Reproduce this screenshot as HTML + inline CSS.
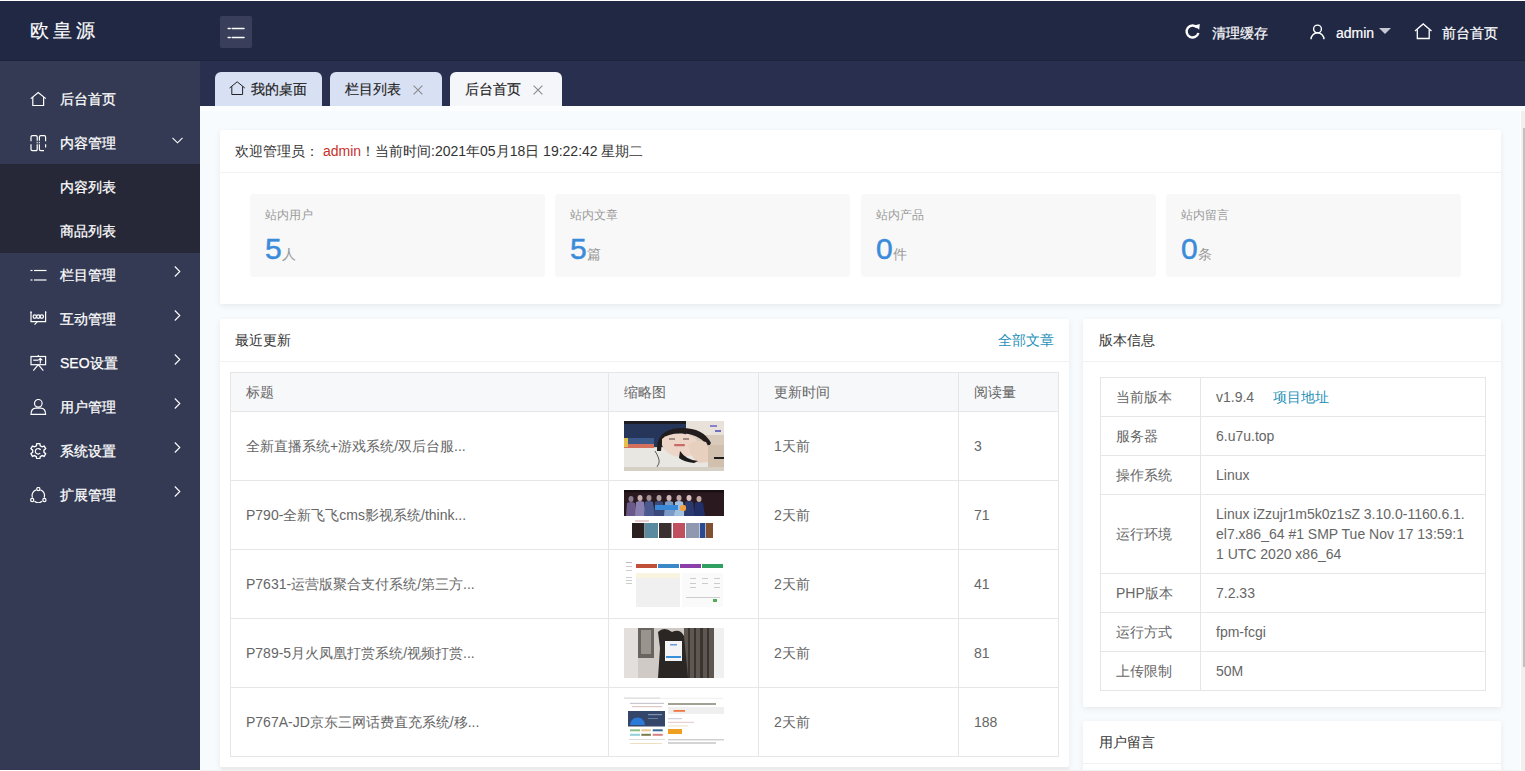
<!DOCTYPE html>
<html><head><meta charset="utf-8">
<style>
*{margin:0;padding:0;box-sizing:border-box}
html,body{width:1525px;height:771px;overflow:hidden;background:#fff;font-family:"Liberation Sans",sans-serif;font-size:14px;color:#333}
.abs{position:absolute}
#header{position:absolute;left:0;top:1px;width:1525px;height:60px;background:#212844;border-bottom:1px solid #1e233d}
#logo{position:absolute;left:30px;top:18px;color:#fff;font-size:19px;letter-spacing:3.8px;line-height:24px;-webkit-text-stroke:0.2px #fff}
#flex{position:absolute;left:220px;top:15px;width:32px;height:32px;background:#393e5b;border-radius:2px}
.hitem{position:absolute;top:22px;height:20px;line-height:20px;color:#fff;font-size:14px}
.hitem span{-webkit-text-stroke:0.2px #fff}
.tab span{-webkit-text-stroke:0.15px #222}
#side{position:absolute;left:0;top:61px;width:200px;height:709px;background:#343a53}
.mi{position:absolute;left:0;width:200px;height:44px;line-height:44px;color:#fff;font-size:14px}
.mi .t{position:absolute;left:60px;top:0;-webkit-text-stroke:0.25px #fff}
.mi svg.ic{position:absolute;left:30px;top:14px}
.mi .arr{position:absolute;left:172px;top:17px}
#sub{position:absolute;left:0;top:164px;width:200px;height:89px;background:#262838}
#tabbar{position:absolute;left:200px;top:61px;width:1325px;height:45px;background:#292f4e}
.tab{position:absolute;top:72px;height:34px;line-height:34px;background:#d8e0f3;border-radius:6px 6px 0 0;color:#222;font-size:14px}
#content{position:absolute;left:200px;top:106px;width:1320px;height:664px;background:#f8fbfe;overflow:hidden}
.card{position:absolute;background:#fff;box-shadow:0 2px 6px rgba(0,0,0,.07);border-radius:2px}
.ch{position:absolute;left:0;top:0;right:0;height:43px;line-height:42px;padding-left:15px;border-bottom:1px solid #f2f2f2;color:#333}
.stat{position:absolute;top:194px;height:83px;width:295px;background:#f8f8f8;border-radius:4px}
.stat .lb{position:absolute;left:15px;top:13px;font-size:12px;color:#999;line-height:16px}
.stat .num{position:absolute;left:15px;top:40px;font-size:30px;color:#3b8bdb;line-height:30px;-webkit-text-stroke:0.5px #3b8bdb}
.stat .unit{font-size:14px;color:#999;-webkit-text-stroke:0}
table{border-collapse:collapse}
.tb td,.tb th{border:1px solid #e6e6e6;padding:9px 15px;line-height:20px;font-size:14px;color:#666;font-weight:normal;text-align:left;vertical-align:middle}
.tb th{background:#f7f8fa;color:#666}
#sb{position:absolute;left:1521px;top:111px;width:4px;height:659px;background:#f0f0f0}
#thumb{position:absolute;left:1523px;top:128px;width:2px;height:539px;background:#c1c1c1}
</style></head><body>
<div id="header">
  <div id="logo">欧皇源</div>
  <div id="flex">
    <svg width="32" height="32" viewBox="0 0 32 32" style="position:absolute;left:0;top:0"><g stroke="#fff" stroke-width="1.5" stroke-linecap="round"><line x1="8.2" y1="12.6" x2="10.2" y2="12.6"/><line x1="12.2" y1="12.6" x2="24" y2="12.6"/><line x1="8.2" y1="21.5" x2="10.2" y2="21.5"/><line x1="12.2" y1="21.5" x2="24" y2="21.5"/></g></svg>
  </div>
  <div class="hitem" style="left:1185px">
    <svg width="17" height="17" viewBox="0 0 17 17" style="position:absolute;left:-1px;top:0px"><path d="M13.2 4.6 A6 6 0 1 0 14.4 10" fill="none" stroke="#fff" stroke-width="2.4"/><path d="M10.2 2.6 L15.8 1 L15.2 6.8 Z" fill="#fff"/></svg>
    <span style="position:absolute;left:27px;top:0;white-space:nowrap">清理缓存</span>
  </div>
  <div class="hitem" style="left:1310px">
    <svg width="16" height="16" viewBox="0 0 16 16" style="position:absolute;left:0;top:1px"><circle cx="7.5" cy="5" r="3.9" fill="none" stroke="#fff" stroke-width="1.4"/><path d="M1 15.3 A6.5 6.5 0 0 1 14 15.3" fill="none" stroke="#fff" stroke-width="1.4"/></svg>
    <span style="position:absolute;left:26px;top:0">admin</span>
    <svg width="12" height="7" viewBox="0 0 12 7" style="position:absolute;left:69px;top:5px"><path d="M0 0 L12 0 L6 6 Z" fill="#c6c8d6"/></svg>
  </div>
  <div class="hitem" style="left:1414px">
    <svg width="19" height="17" viewBox="0 0 19 17" style="position:absolute;left:0;top:0"><path d="M1 8 L9.2 0.9 L17.5 8" fill="none" stroke="#fff" stroke-width="1.3"/><path d="M3.3 6.5 V15.5 H15.2 V6.5" fill="none" stroke="#fff" stroke-width="1.3"/></svg>
    <span style="position:absolute;left:28px;top:0;white-space:nowrap">前台首页</span>
  </div>
</div>

<div id="side">
</div>
<div id="sub"></div>
<div class="mi" style="top:77px">
  <svg class="ic" width="17" height="16" viewBox="0 0 17 16"><path d="M0.8 7.6 L8.2 1.6 L15.8 7.6" fill="none" stroke="#fff" stroke-width="1.2"/><path d="M2.8 6 V14.5 H13.6 V6" fill="none" stroke="#fff" stroke-width="1.2"/></svg>
  <span class="t">后台首页</span>
</div>
<div class="mi" style="top:121px">
  <svg class="ic" width="17" height="17" viewBox="0 0 17 17" style="top:14px"><g fill="none" stroke="#fff" stroke-width="1.2"><path d="M1 6.3 V2 Q1 0.6 2.4 0.6 H5.8 Q7.2 0.6 7.2 2 V5.8"/><path d="M9.4 5.8 V2 Q9.4 0.6 10.8 0.6 H14.2 Q15.6 0.6 15.6 2 V6.3"/><path d="M1 9.3 V14.2 Q1 15.6 2.4 15.6 H6 Q7.2 15.6 7.2 14.2 V10"/><path d="M9.4 10 V14.2 Q9.4 15.6 10.8 15.6 H14"/><path d="M15.6 9.3 V12.6"/></g><g fill="#fff"><rect x="6.6" y="6.8" width="1.2" height="1"/><rect x="8.8" y="6.8" width="1.2" height="1"/><rect x="6.6" y="8.7" width="1.2" height="1"/><rect x="8.8" y="8.7" width="1.2" height="1"/></g></svg>
  <span class="t">内容管理</span>
  <svg class="arr" width="11" height="7" viewBox="0 0 11 7" style="top:16px"><path d="M0.5 0.8 L5.5 5.8 L10.5 0.8" fill="none" stroke="#fff" stroke-width="1.1"/></svg>
</div>
<div class="mi" style="top:165px"><span class="t">内容列表</span></div>
<div class="mi" style="top:209px"><span class="t">商品列表</span></div>
<div class="mi" style="top:253px">
  <svg class="ic" width="17" height="16" viewBox="0 0 17 16"><g stroke="#fff" stroke-width="1.2"><line x1="0.5" y1="3.5" x2="2.5" y2="3.5"/><line x1="4" y1="3.5" x2="16.5" y2="3.5"/><line x1="0.5" y1="13" x2="2.5" y2="13"/><line x1="4" y1="13" x2="16.5" y2="13"/></g></svg>
  <span class="t">栏目管理</span>
  <svg class="arr" width="7" height="11" viewBox="0 0 7 11" style="top:13px;left:174px"><path d="M0.8 0.5 L5.8 5.5 L0.8 10.5" fill="none" stroke="#fff" stroke-width="1.1"/></svg>
</div>
<div class="mi" style="top:297px">
  <svg class="ic" width="17" height="16" viewBox="0 0 17 16"><g fill="none" stroke="#fff" stroke-width="1.2"><path d="M1 0.2 V2 M15.6 0.2 V2"/><path d="M1 1 V10.6 H15.6 V1"/><path d="M7.3 10.6 L4.6 13.6"/><circle cx="4.8" cy="5.6" r="1.7"/><circle cx="8.3" cy="5.6" r="1.7"/><circle cx="11.8" cy="5.6" r="1.7"/></g></svg>
  <span class="t">互动管理</span>
  <svg class="arr" width="7" height="11" viewBox="0 0 7 11" style="top:13px;left:174px"><path d="M0.8 0.5 L5.8 5.5 L0.8 10.5" fill="none" stroke="#fff" stroke-width="1.1"/></svg>
</div>
<div class="mi" style="top:341px">
  <svg class="ic" width="17" height="16" viewBox="0 0 17 16"><g fill="none" stroke="#fff" stroke-width="1.2"><path d="M8.3 0 V1.5"/><rect x="1" y="1.5" width="14.6" height="8.2"/><path d="M3.2 5.2 H8"/><path d="M10.3 8.5 V3.6 M8.3 5.4 L10.3 3.4 L12.3 5.4"/><path d="M8.3 9.7 L3.3 15.6 M8.3 9.7 L13.3 15.6"/></g></svg>
  <span class="t">SEO设置</span>
  <svg class="arr" width="7" height="11" viewBox="0 0 7 11" style="top:13px;left:174px"><path d="M0.8 0.5 L5.8 5.5 L0.8 10.5" fill="none" stroke="#fff" stroke-width="1.1"/></svg>
</div>
<div class="mi" style="top:385px">
  <svg class="ic" width="17" height="16" viewBox="0 0 17 16"><g fill="none" stroke="#fff" stroke-width="1.2"><circle cx="8.3" cy="4.3" r="3.8"/><path d="M1 15.4 Q1 9.2 6 9.2 H10.6 Q15.6 9.2 15.6 15.4 Z"/></g></svg>
  <span class="t">用户管理</span>
  <svg class="arr" width="7" height="11" viewBox="0 0 7 11" style="top:13px;left:174px"><path d="M0.8 0.5 L5.8 5.5 L0.8 10.5" fill="none" stroke="#fff" stroke-width="1.1"/></svg>
</div>
<div class="mi" style="top:429px">
  <svg class="ic" width="17" height="16" viewBox="0 0 17 16"><g fill="none" stroke="#fff" stroke-width="1.2"><path id="gear" d="M7 0.6 H9.6 L10 2.5 L11.6 3.4 L13.4 2.7 L14.7 5 L13.2 6.3 V8.1 L14.7 9.4 L13.4 11.7 L11.6 11 L10 11.9 L9.6 13.8 H7 L6.6 11.9 L5 11 L3.2 11.7 L1.9 9.4 L3.4 8.1 V6.3 L1.9 5 L3.2 2.7 L5 3.4 L6.6 2.5 Z" transform="translate(8.3,8.2) scale(1.15) translate(-8.3,-7.2)"/><path d="M10.6 7 A2.8 2.8 0 1 0 10.2 10.2"/></g></svg>
  <span class="t">系统设置</span>
  <svg class="arr" width="7" height="11" viewBox="0 0 7 11" style="top:13px;left:174px"><path d="M0.8 0.5 L5.8 5.5 L0.8 10.5" fill="none" stroke="#fff" stroke-width="1.1"/></svg>
</div>
<div class="mi" style="top:473px">
  <svg class="ic" width="17" height="16" viewBox="0 0 17 16"><g fill="none" stroke="#fff" stroke-width="1.2"><path d="M6.3 2.8 A6 6 0 0 0 2.4 10.8"/><path d="M10.3 2.8 A6 6 0 0 1 14.2 10.8"/><path d="M4.5 14.2 A6 6 0 0 0 12.1 14.2"/><circle cx="8.3" cy="2" r="1.6"/><circle cx="2.2" cy="13" r="1.6"/><circle cx="14.4" cy="13" r="1.6"/></g></svg>
  <span class="t">扩展管理</span>
  <svg class="arr" width="7" height="11" viewBox="0 0 7 11" style="top:13px;left:174px"><path d="M0.8 0.5 L5.8 5.5 L0.8 10.5" fill="none" stroke="#fff" stroke-width="1.1"/></svg>
</div>

<div id="tabbar"></div>
<div class="tab" style="left:215px;width:107px">
  <svg width="17" height="15" viewBox="0 0 17 15" style="position:absolute;left:14px;top:8.5px"><path d="M0.6 7 L8.2 0.8 L15.8 7" fill="none" stroke="#222" stroke-width="1"/><path d="M2.8 5.3 V13.5 H13.6 V5.3" fill="none" stroke="#222" stroke-width="1"/></svg>
  <span style="position:absolute;left:36px;top:0">我的桌面</span>
</div>
<div class="tab" style="left:330px;width:112px">
  <span style="position:absolute;left:15px;top:0">栏目列表</span>
  <svg width="10" height="10" viewBox="0 0 10 10" style="position:absolute;left:83px;top:12.5px"><path d="M0.6 0.6 L9.4 9.4 M9.4 0.6 L0.6 9.4" stroke="#8a8a8a" stroke-width="1.1"/></svg>
</div>
<div class="tab" style="left:450px;width:112px;background:#f5f6f9">
  <span style="position:absolute;left:15px;top:0">后台首页</span>
  <svg width="10" height="10" viewBox="0 0 10 10" style="position:absolute;left:83px;top:12.5px"><path d="M0.6 0.6 L9.4 9.4 M9.4 0.6 L0.6 9.4" stroke="#8a8a8a" stroke-width="1.1"/></svg>
</div>

<div id="content"></div><div class="abs" style="left:200px;top:106px;width:1325px;height:5px;background:#fbfdff"></div>

<!-- welcome card -->
<div class="card" style="left:220px;top:130px;width:1281px;height:174px">
  <div class="ch">欢迎管理员： <span style="color:#c9302c">admin</span>！当前时间:2021年05月18日 19:22:42 星期二</div>
</div>
<div class="stat" style="left:250px"><div class="lb">站内用户</div><div class="num">5<span class="unit">人</span></div></div>
<div class="stat" style="left:555px"><div class="lb">站内文章</div><div class="num">5<span class="unit">篇</span></div></div>
<div class="stat" style="left:861px"><div class="lb">站内产品</div><div class="num">0<span class="unit">件</span></div></div>
<div class="stat" style="left:1166px"><div class="lb">站内留言</div><div class="num">0<span class="unit">条</span></div></div>

<!-- recent card -->
<div class="card" style="left:220px;top:319px;width:849px;height:448px">
  <div class="ch">最近更新<span style="position:absolute;right:15px;top:0;color:#2590b8">全部文章</span></div>
</div>
<table class="tb abs" style="left:230px;top:372px;width:829px">
  <tr><th style="width:378px">标题</th><th style="width:150px">缩略图</th><th style="width:200px">更新时间</th><th>阅读量</th></tr>
  <tr style="height:69px"><td>全新直播系统+游戏系统/双后台服...</td><td><svg width="100" height="50" viewBox="0 0 100 50" style="display:block"><defs><filter id="bl1" x="0" y="0" width="1" height="1"><feGaussianBlur stdDeviation="0.7"/></filter></defs><g filter="url(#bl1)"><rect width="100" height="50" fill="#d9cbbb"/><rect x="60" y="0" width="40" height="14" fill="#e9e2da"/><rect x="0" y="0" width="62" height="26" fill="#26355a"/><rect x="0" y="0" width="62" height="3" fill="#1a1a22"/><rect x="0" y="17" width="30" height="6" fill="#3a5a8a"/><rect x="0" y="23" width="30" height="4" fill="#d4705c"/><rect x="0" y="17" width="4" height="9" fill="#e6c050"/><rect x="0" y="27" width="100" height="23" fill="#e9e7e1"/><path d="M33 30 Q32 9 55 7 Q79 6 87 22 L84 27 Q78 14 60 12.5 Q44 12 38 20 L37 30 Z" fill="#221d1f"/><path d="M38 18 Q44 12 58 12.5 Q72 14 74 22 L70 33 Q60 38 50 35 Q40 31 38 24 Z" fill="#edd6c8"/><path d="M64 24 Q71 18 82 21 Q88 30 85 41 L74 42 L67 34 Z" fill="#e8d0bf"/><rect x="50" y="23" width="11" height="2.2" rx="1" fill="#cc6a68"/><rect x="45" y="17.5" width="6" height="1" fill="#5a4040"/><rect x="59" y="17.5" width="6" height="1" fill="#5a4040"/><path d="M56 30 Q62 39 74 40 L70 42 Q60 41 55 37 Z" fill="#1e1a1c"/><rect x="84" y="24" width="16" height="26" fill="#d2c0ae"/><rect x="90" y="36" width="10" height="2" fill="#1a1a1a"/><path d="M31 30 Q36 38 35 42 Q33 46 32 48" stroke="#333" stroke-width="0.8" fill="none"/><rect x="86" y="4" width="7" height="2" fill="#8a80d0"/><rect x="91" y="9" width="6" height="2" fill="#7070c0"/><rect x="0" y="46" width="100" height="4" fill="#d6cfc4"/></g></svg></td><td>1天前</td><td>3</td></tr>
  <tr style="height:69px"><td>P790-全新飞飞cms影视系统/think...</td><td><svg width="100" height="50" viewBox="0 0 100 50" style="display:block"><rect width="100" height="50" fill="#fff"/><rect x="0" y="0" width="100" height="26" fill="#2a1a20"/><rect x="0" y="0" width="100" height="2.5" fill="#1a1014"/><g><ellipse cx="7" cy="9" rx="2.5" ry="3" fill="#8a7a90"/><path d="M2 26 L3 13 Q7 11 11 13 L13 26 Z" fill="#6a5a8a"/><ellipse cx="16" cy="8" rx="2.5" ry="3" fill="#c8b0b0"/><path d="M11 26 L12 12 Q16 10 20 12 L22 26 Z" fill="#8a80b0"/><ellipse cx="25" cy="8" rx="2.5" ry="3" fill="#a09090"/><path d="M20 26 L21 12 Q25 10 29 12 L31 26 Z" fill="#4a5a90"/><ellipse cx="35" cy="8" rx="2.5" ry="3" fill="#b0a0a0"/><path d="M30 26 L31 12 Q35 10 39 12 L41 26 Z" fill="#3a4a7a"/><ellipse cx="45" cy="8" rx="2.5" ry="3" fill="#d0b8b8"/><path d="M40 26 L41 12 Q45 10 49 12 L51 26 Z" fill="#7a9ac8"/><ellipse cx="55" cy="8" rx="2.5" ry="3" fill="#c0a8a8"/><path d="M50 26 L51 12 Q55 10 59 12 L61 26 Z" fill="#a0c0e0"/><ellipse cx="65" cy="8" rx="2.5" ry="3" fill="#d8c0c0"/><path d="M60 26 L61 12 Q65 10 69 12 L71 26 Z" fill="#2a3a70"/><ellipse cx="75" cy="9" rx="2.5" ry="3" fill="#c0a8a0"/><path d="M70 26 L71 13 Q75 11 79 13 L81 26 Z" fill="#22306a"/></g><rect x="31" y="15" width="23" height="5" fill="#3a88d8"/><rect x="56" y="15" width="6" height="6" rx="2" fill="#f0a040"/><rect x="11" y="30.5" width="14" height="1" fill="#d0a0a0"/><g><rect x="8" y="33" width="12.5" height="15" fill="#2a2020"/><rect x="21" y="33" width="13" height="15" fill="#5a8aa0"/><rect x="35" y="33" width="12.5" height="15" fill="#3a3030"/><rect x="49" y="33" width="12" height="15" fill="#c05060"/><rect x="62" y="33" width="13" height="15" fill="#9098b0"/><rect x="75.7" y="33" width="5.7" height="15" fill="#2a4a90"/><rect x="82" y="33" width="7" height="15" fill="#805030"/></g></svg></td><td>2天前</td><td>71</td></tr>
  <tr style="height:69px"><td>P7631-运营版聚合支付系统/第三方...</td><td><svg width="100" height="50" viewBox="0 0 100 50" style="display:block"><rect width="100" height="50" fill="#fff"/><rect x="2" y="3" width="6" height="1" fill="#bbb"/><rect x="2" y="7" width="6" height="1" fill="#ccc"/><rect x="2" y="11" width="6" height="1" fill="#ccc"/><rect x="2" y="18" width="6" height="1" fill="#ccc"/><rect x="2" y="21" width="6" height="1" fill="#ccc"/><rect x="2" y="24" width="6" height="1" fill="#ccc"/><rect x="12" y="5" width="21" height="4" fill="#c0503a"/><rect x="34" y="5" width="21" height="4" fill="#3a88c8"/><rect x="56" y="5" width="21" height="4" fill="#8a40a8"/><rect x="78" y="5" width="21" height="4" fill="#30a060"/><rect x="12" y="14" width="44" height="34" fill="#f0f0f0"/><rect x="12" y="14" width="44" height="5" fill="#f8f4e0"/><rect x="58" y="14" width="41" height="34" fill="#fafafa"/><g fill="#ccc"><rect x="66" y="19" width="6" height="1"/><rect x="78" y="19" width="6" height="1"/><rect x="90" y="19" width="6" height="1"/><rect x="66" y="24" width="6" height="1"/><rect x="78" y="24" width="6" height="1"/><rect x="90" y="24" width="6" height="1"/><rect x="66" y="28" width="6" height="1"/><rect x="90" y="28" width="6" height="1"/><rect x="62" y="38" width="34" height="1"/></g><rect x="89" y="40" width="4" height="3" fill="#5a5"/></svg></td><td>2天前</td><td>41</td></tr>
  <tr style="height:69px"><td>P789-5月火凤凰打赏系统/视频打赏...</td><td><svg width="100" height="50" viewBox="0 0 100 50" style="display:block"><rect width="100" height="50" fill="#fff"/><rect x="0" y="0" width="90" height="50" fill="#cfcac6"/><rect x="0" y="0" width="14" height="50" fill="#e2dfdc"/><rect x="14" y="0" width="16" height="30" fill="#6a6460"/><rect x="17" y="2" width="10" height="24" fill="#9a948e"/><rect x="60" y="0" width="30" height="50" fill="#5e5650"/><g fill="#3a3430"><rect x="64" y="0" width="2" height="50"/><rect x="70" y="0" width="2" height="50"/><rect x="76" y="0" width="3" height="50"/><rect x="83" y="0" width="2" height="50"/></g><path d="M34 4 Q40 -2 48 4 Q56 0 60 8 L64 50 L34 50 L36 20 Z" fill="#2a2624"/><rect x="41" y="13" width="17" height="20" fill="#f4f4f6"/><rect x="42" y="28" width="15" height="2" fill="#3a90d8"/><rect x="46" y="16" width="7" height="1.5" fill="#6aa0d8"/><rect x="90" y="0" width="10" height="50" fill="#f0f0f0"/></svg></td><td>2天前</td><td>81</td></tr>
  <tr style="height:69px"><td>P767A-JD京东三网话费直充系统/移...</td><td><svg width="100" height="50" viewBox="0 0 100 50" style="display:block"><rect width="100" height="50" fill="#fff"/><rect x="0" y="0.5" width="36" height="1.2" fill="#d8d8d8"/><rect x="36" y="0.8" width="63" height="1" fill="#eee"/><rect x="6" y="5.8" width="34" height="1.2" fill="#c8c8d0"/><rect x="8" y="9" width="30" height="1.2" fill="#e0c8c8"/><rect x="4" y="14" width="37" height="15.5" fill="#34466a"/><path d="M6 28 A7.5 7.5 0 0 1 21 28 Z" fill="#2a7ad8"/><rect x="24" y="17" width="14" height="1.2" fill="#8090b0"/><rect x="24" y="21" width="10" height="1" fill="#6a7a9a"/><rect x="6" y="32.3" width="10" height="2" fill="#88c088"/><rect x="17.3" y="32.3" width="9.6" height="2" fill="#e8c890"/><rect x="28.7" y="32.3" width="10" height="2" fill="#3a6a9a"/><rect x="6" y="36.8" width="10" height="2" fill="#90d0d8"/><rect x="17.3" y="36.8" width="9.6" height="2" fill="#7a7a4a"/><rect x="28.7" y="36.8" width="10" height="2" fill="#d88080"/><rect x="5" y="42" width="36" height="1" fill="#ddd"/><rect x="6" y="46" width="32" height="1" fill="#f0e0c0"/><rect x="44" y="6.3" width="48" height="1.4" fill="#7a7a6a"/><rect x="44" y="10" width="56" height="7" fill="#efefef"/><rect x="49.5" y="13" width="11.5" height="1.8" fill="#f07840"/><rect x="44" y="21.2" width="14" height="1" fill="#c8c8d8"/><rect x="44" y="24.8" width="26" height="1" fill="#e0c8c8"/><rect x="44" y="28.5" width="20" height="1" fill="#e8e0c8"/><rect x="44" y="32" width="14" height="5" fill="#f0a020"/><rect x="44" y="42.3" width="56" height="1" fill="#bbb"/><rect x="44" y="45.5" width="48" height="1" fill="#aaa"/></svg></td><td>2天前</td><td>188</td></tr>
</table>

<!-- version card -->
<div class="card" style="left:1083px;top:319px;width:418px;height:388px">
  <div class="ch" style="padding-left:16px">版本信息</div>
</div>
<table class="tb abs" style="left:1100px;top:377px;width:386px">
  <tr><td style="width:100px">当前版本</td><td>v1.9.4 <a style="color:#2590b8;margin-left:15px">项目地址</a></td></tr>
  <tr><td>服务器</td><td>6.u7u.top</td></tr>
  <tr><td>操作系统</td><td>Linux</td></tr>
  <tr><td>运行环境</td><td style="white-space:nowrap">Linux iZzujr1m5k0z1sZ 3.10.0-1160.6.1.<br>el7.x86_64 #1 SMP Tue Nov 17 13:59:1<br>1 UTC 2020 x86_64</td></tr>
  <tr><td>PHP版本</td><td>7.2.33</td></tr>
  <tr><td>运行方式</td><td>fpm-fcgi</td></tr>
  <tr><td>上传限制</td><td>50M</td></tr>
</table>

<div class="card" style="left:1083px;top:721px;width:418px;height:60px">
  <div class="ch" style="padding-left:16px">用户留言</div>
</div>

<div class="abs" style="left:221px;top:767px;width:848px;height:4px;background:#ececec"></div>
<div class="abs" style="left:200px;top:770px;width:1325px;height:1px;background:#f2f2f2"></div>
<div id="sb"></div><div id="thumb"></div>
</body></html>
